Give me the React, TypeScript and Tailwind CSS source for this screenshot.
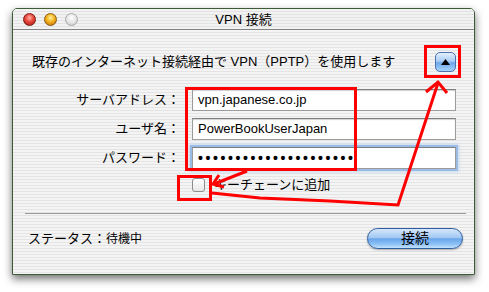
const stripes =
  "bg-[repeating-linear-gradient(180deg,#f4f4f4_0px,#f4f4f4_2px,#e4e4e4_2px,#e4e4e4_3px)]"

function Light({ color }: { color: "red" | "yellow" | "gray" }) {
  const fill =
    color === "red"
      ? "bg-[radial-gradient(circle_at_50%_35%,#ffb3a8_0%,#e8463a_45%,#9a1a12_100%)] border-[#7a1a12]"
      : color === "yellow"
        ? "bg-[radial-gradient(circle_at_50%_35%,#fff0a0_0%,#f3b31d_45%,#b8660a_100%)] border-[#8a5a10]"
        : "bg-[radial-gradient(circle_at_50%_35%,#ffffff_0%,#e6e6e6_50%,#c4c4c4_100%)] border-[#a8a8a8]"
  return <div className={`w-[13px] h-[13px] rounded-full border ${fill}`} />
}

function Field({ value, focused, dots }: { value: string; focused?: boolean; dots?: boolean }) {
  return (
    <div
      className={`h-[22px] w-[264px] bg-white flex items-center pl-[5px] border border-[#9c9c9c] border-t-[#7e7e7e] ${
        focused ? "shadow-[0_0_0_2px_#9bbbe4,0_0_3px_3px_#c3d7f1]" : "shadow-[inset_0_1px_1px_#d0d0d0]"
      }`}
    >
      <span className={dots ? "text-[14px] tracking-[2.6px] font-bold" : ""}>{value}</span>
    </div>
  )
}

export default function App() {
  return (
    <div className="relative w-[489px] h-[292px] bg-white overflow-hidden pl-[12px] pt-[8px] font-['Lucida_Grande','Liberation_Sans','Noto_Sans_CJK_JP',sans-serif] text-[13px] text-black">
      {/* Window */}
      <div
        className={`w-[463px] h-[267px] flex flex-col border border-[#3d5a36] rounded-t-[5px] overflow-hidden shadow-[0_4px_9px_rgba(0,0,0,0.55)] ${stripes}`}
      >
        {/* Title bar */}
        <div className="h-[21px] grid grid-cols-[1fr_auto_1fr] items-center border-b border-[#858585] bg-[repeating-linear-gradient(180deg,#f2f2f2_0px,#f2f2f2_2px,#e2e2e2_2px,#e2e2e2_3px)]">
          <div className="flex items-center gap-[8px] pl-[10px]">
            <Light color="red" />
            <Light color="yellow" />
            <Light color="gray" />
          </div>
          <div className="leading-none">VPN 接続</div>
          <div />
        </div>

        {/* Description row */}
        <div className="mt-[22px] flex items-center justify-between pl-[19px] pr-[18px] h-[20px]">
          <span>既存のインターネット接続経由で VPN（PPTP）を使用します</span>
          <div className="w-[21px] h-[20px] rounded-[5px] border border-[#4b72ad] bg-[linear-gradient(180deg,#e4f0fd_0%,#a9cdf5_45%,#6ea8ea_55%,#a8d4fb_100%)] flex items-center justify-center">
            <svg width="9" height="6" viewBox="0 0 9 6">
              <polygon points="4.5,0 9,6 0,6" fill="#000" />
            </svg>
          </div>
        </div>

        {/* Form */}
        <div className="mt-[17px] grid grid-cols-[167px_264px] gap-x-[12px] gap-y-[7px] items-center">
          <div className="text-right">サーバアドレス：</div>
          <Field value="vpn.japanese.co.jp" />
          <div className="text-right">ユーザ名：</div>
          <Field value="PowerBookUserJapan" />
          <div className="text-right">パスワード：</div>
          <Field value={"•".repeat(21)} focused dots />
        </div>

        {/* Keychain */}
        <div className="mt-[9px] ml-[179px] flex items-center gap-[9px] h-[14px]">
          <div className="w-[13px] h-[14px] rounded-[3px] border border-[#8c8c8c] bg-[linear-gradient(180deg,#ffffff_0%,#e8e8e8_100%)]" />
          <span>キーチェーンに追加</span>
        </div>

        <div className="mt-[21px] ml-[12px] mr-[8px] h-px bg-[#9a9a9a]" />

        {/* Status row */}
        <div className="mt-[14px] flex items-center justify-between pl-[15px] pr-[11px]">
          <div className="flex items-center">
            <span>ステータス：</span>
            <span className="text-[12px]">待機中</span>
          </div>
          <button className="w-[96px] h-[21px] rounded-full border border-[#2f5d9e] bg-[linear-gradient(180deg,#d5e7fb_0%,#a3c9f3_45%,#6aa5ec_52%,#8cc2f6_80%,#c3e2fd_100%)] flex items-center justify-center text-[14px] shadow-[0_1px_2px_rgba(0,0,0,0.3)]">
            接続
          </button>
        </div>
      </div>

      {/* Red annotations */}
      <svg
        className="absolute inset-0 pointer-events-none"
        width="489"
        height="292"
        viewBox="0 0 489 292"
      >
        <g fill="none" stroke="#ff0000" strokeWidth="3" strokeLinejoin="miter">
          <rect x="186.5" y="88.5" width="169" height="81" />
          <rect x="178.5" y="176.5" width="32" height="23" />
          <rect x="425.5" y="46.5" width="34" height="30" />
          <polyline points="247,171 214,184" />
          <polyline points="219,175 213,184 224,187" />
          <polyline points="212,193 260,198 330,201 398,205 438,83" />
          <polyline points="426,92 438,82 447,93" />
        </g>
      </svg>
    </div>
  )
}
